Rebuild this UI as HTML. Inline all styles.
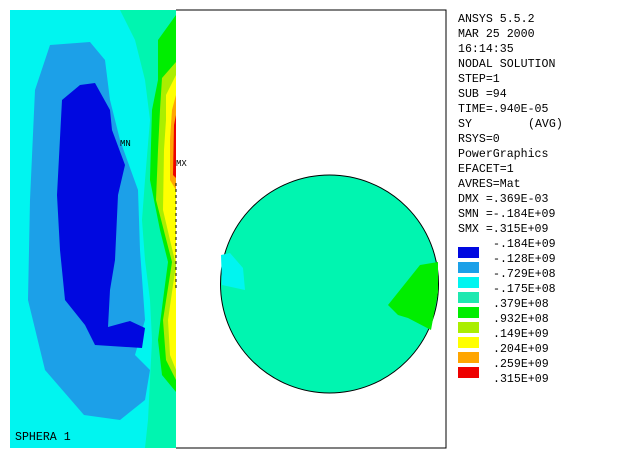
<!DOCTYPE html>
<html><head><style>
html,body{margin:0;padding:0;background:#fff;width:630px;height:459px;overflow:hidden}
svg{position:absolute;left:0;top:0}
.t{font-family:"Liberation Mono",monospace;font-size:11.6px;fill:#000}
</style></head><body>
<svg width="630" height="459" viewBox="0 0 630 459">
<rect x="10" y="10" width="166" height="438" fill="#00f5f0"/>
<polygon fill="#00f5b0" points="120,10 176,10 176,448 145,448 148,420 150,380 152,340 150,300 145,260 142,220 145,180 150,120 145,80 135,40"/>
<polygon fill="#00ee00" points="158,40 176,15 176,392 162,375 158,340 163,300 168,262 160,230 150,180 152,110 158,80"/>
<polygon fill="#aaee00" points="162,78 176,62 176,380 166,360 163,320 168,288 172,262 165,235 156,200 158,150 160,110"/>
<polygon fill="#ffff00" points="166,95 176,75 176,370 170,355 168,320 172,292 176,265 170,240 163,210 164,150 166,120"/>
<polygon fill="#ffa500" points="172,110 176,95 176,190 170,180 170,140"/>
<polygon fill="#ee0000" points="174,125 176,115 176,178 173,175"/>
<polygon fill="#1ca0e8" points="50,45 90,42 105,60 110,100 120,140 138,190 140,250 145,320 135,355 150,370 145,400 120,420 84,415 45,370 28,300 30,200 35,90"/>
<polygon fill="#0008e0" points="80,85 95,83 110,110 112,130 125,165 118,195 115,260 110,290 108,327 130,321 145,328 142,348 95,345 85,325 65,300 60,250 57,195 62,100"/>
<line x1="176" y1="183" x2="176" y2="290" stroke="#000" stroke-dasharray="3,3" stroke-width="1"/>
<text x="120" y="146" class="t" style="font-size:9px">MN</text>
<text x="176" y="166" class="t" style="font-size:9px">MX</text>
<text x="15" y="440" class="t">SPHERA 1</text>
<polyline fill="none" stroke="#000" points="176,10 446,10 446,448 176,448"/>
<circle cx="329.5" cy="284" r="109" fill="#00f5b0" stroke="#000" stroke-width="1"/>
<polygon fill="#00f5f0" points="221,255 230,253 243,268 245,290 222,285"/>
<polygon fill="#00ee00" points="388,305 420,265 438,262 438,292 431,330 408,318 398,315"/>
<g class="t">
<text x="458" y="22">ANSYS 5.5.2</text>
<text x="458" y="37">MAR 25 2000</text>
<text x="458" y="52">16:14:35</text>
<text x="458" y="67">NODAL SOLUTION</text>
<text x="458" y="82">STEP=1</text>
<text x="458" y="97">SUB =94</text>
<text x="458" y="112">TIME=.940E-05</text>
<text x="458" y="127">SY</text><text x="528" y="127">(AVG)</text>
<text x="458" y="142">RSYS=0</text>
<text x="458" y="157">PowerGraphics</text>
<text x="458" y="172">EFACET=1</text>
<text x="458" y="187">AVRES=Mat</text>
<text x="458" y="202">DMX =.369E-03</text>
<text x="458" y="217">SMN =-.184E+09</text>
<text x="458" y="232">SMX =.315E+09</text>
<text x="493" y="247">-.184E+09</text>
<text x="493" y="262">-.128E+09</text>
<text x="493" y="277">-.729E+08</text>
<text x="493" y="292">-.175E+08</text>
<text x="493" y="307">.379E+08</text>
<text x="493" y="322">.932E+08</text>
<text x="493" y="337">.149E+09</text>
<text x="493" y="352">.204E+09</text>
<text x="493" y="367">.259E+09</text>
<text x="493" y="382">.315E+09</text>
</g>
<rect x="458" y="247" width="21" height="11" fill="#0008e0"/>
<rect x="458" y="262" width="21" height="11" fill="#1ca0e8"/>
<rect x="458" y="277" width="21" height="11" fill="#00f5f0"/>
<rect x="458" y="292" width="21" height="11" fill="#1ee8b0"/>
<rect x="458" y="307" width="21" height="11" fill="#00ee00"/>
<rect x="458" y="322" width="21" height="11" fill="#aaee00"/>
<rect x="458" y="337" width="21" height="11" fill="#ffff00"/>
<rect x="458" y="352" width="21" height="11" fill="#ffa500"/>
<rect x="458" y="367" width="21" height="11" fill="#ee0000"/>
</svg>
</body></html>
